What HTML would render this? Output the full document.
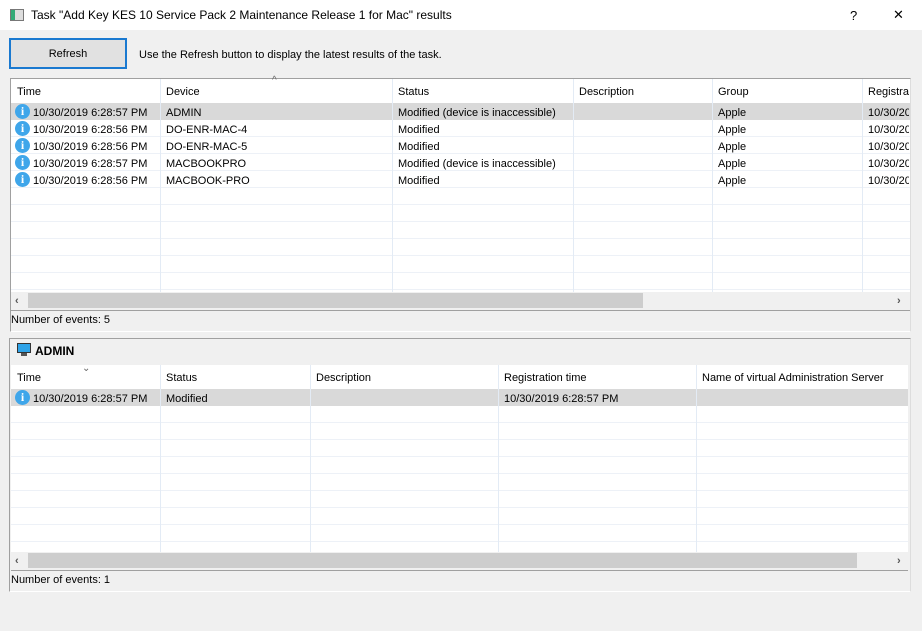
<!DOCTYPE html><html><head><style>
*{margin:0;padding:0;box-sizing:border-box}
body{width:922px;height:631px;background:#f0f0f0;font-family:"Liberation Sans",sans-serif;font-size:11px;color:#000;position:relative;overflow:hidden}
.a{position:absolute}
.t{position:absolute;white-space:nowrap;line-height:17px;padding-top:1px}
.ic{position:absolute;width:15px;height:15px;border-radius:50%;background:#3fa6ea;color:#fff;font:bold 12px "Liberation Serif",serif;text-align:center;line-height:15px}
.grid{position:absolute;background-color:#fff;background-image:repeating-linear-gradient(to bottom,transparent 0,transparent 16px,#edf1f7 16px,#edf1f7 17px)}
.vl{position:absolute;width:1px;background:#e3ebf5}
.sel{position:absolute;background:#d9d9d9}
</style></head><body>
<div class="a" style="left:0;top:0;width:922px;height:30px;background:#fff"></div>
<div class="a" style="left:10px;top:9px;width:14px;height:12px;border:1px solid #777;background:linear-gradient(90deg,#3a7 0 4px,#ddd 4px)"></div>
<div class="t" style="left:31px;top:6px;font-size:12px">Task "Add Key KES 10 Service Pack 2 Maintenance Release 1 for Mac" results</div>
<div class="t" style="left:850px;top:6px;font-size:13px">?</div>
<div class="t" style="left:893px;top:5px;font-size:13px">✕</div>
<div class="a" style="left:9px;top:38px;width:118px;height:31px;border:2px solid #1a79d0;background:#e1e1e1"></div>
<div class="t" style="left:9px;top:45px;width:118px;text-align:center">Refresh</div>
<div class="t" style="left:139px;top:46px">Use the Refresh button to display the latest results of the task.</div>

<!-- top panel -->
<div class="a" style="left:10px;top:78px;width:901px;height:254px;border:1px solid #a0a0a0;border-right-color:#ddd;border-bottom-color:#fff;background:#f0f0f0"></div>
<div class="a" style="left:11px;top:79px;width:899px;height:24px;background:#fff"></div>
<div class="grid" style="left:11px;top:103px;width:899px;height:189px"></div>
<div class="sel" style="left:11px;top:103px;width:899px;height:17px"></div>
<div class="vl" style="left:160px;top:79px;height:213px"></div>
<div class="vl" style="left:392px;top:79px;height:213px"></div>
<div class="vl" style="left:573px;top:79px;height:213px"></div>
<div class="vl" style="left:712px;top:79px;height:213px"></div>
<div class="vl" style="left:862px;top:79px;height:213px"></div>
<div class="t" style="left:272px;top:71px;font-size:10px;color:#666">^</div>
<div class="t" style="left:17px;top:83px">Time</div><div class="t" style="left:166px;top:83px">Device</div><div class="t" style="left:398px;top:83px">Status</div><div class="t" style="left:579px;top:83px">Description</div><div class="t" style="left:718px;top:83px">Group</div><div class="t" style="left:868px;top:83px;width:41px;overflow:hidden">Registra</div>

<div class="ic" style="left:15px;top:104px">i</div><div class="t" style="left:33px;top:104px">10/30/2019 6:28:57 PM</div><div class="t" style="left:166px;top:104px">ADMIN</div><div class="t" style="left:398px;top:104px">Modified (device is inaccessible)</div><div class="t" style="left:718px;top:104px">Apple</div><div class="t" style="left:868px;top:104px;width:41px;overflow:hidden">10/30/2019</div>
<div class="ic" style="left:15px;top:121px">i</div><div class="t" style="left:33px;top:121px">10/30/2019 6:28:56 PM</div><div class="t" style="left:166px;top:121px">DO-ENR-MAC-4</div><div class="t" style="left:398px;top:121px">Modified</div><div class="t" style="left:718px;top:121px">Apple</div><div class="t" style="left:868px;top:121px;width:41px;overflow:hidden">10/30/2019</div>
<div class="ic" style="left:15px;top:138px">i</div><div class="t" style="left:33px;top:138px">10/30/2019 6:28:56 PM</div><div class="t" style="left:166px;top:138px">DO-ENR-MAC-5</div><div class="t" style="left:398px;top:138px">Modified</div><div class="t" style="left:718px;top:138px">Apple</div><div class="t" style="left:868px;top:138px;width:41px;overflow:hidden">10/30/2019</div>
<div class="ic" style="left:15px;top:155px">i</div><div class="t" style="left:33px;top:155px">10/30/2019 6:28:57 PM</div><div class="t" style="left:166px;top:155px">MACBOOKPRO</div><div class="t" style="left:398px;top:155px">Modified (device is inaccessible)</div><div class="t" style="left:718px;top:155px">Apple</div><div class="t" style="left:868px;top:155px;width:41px;overflow:hidden">10/30/2019</div>
<div class="ic" style="left:15px;top:172px">i</div><div class="t" style="left:33px;top:172px">10/30/2019 6:28:56 PM</div><div class="t" style="left:166px;top:172px">MACBOOK-PRO</div><div class="t" style="left:398px;top:172px">Modified</div><div class="t" style="left:718px;top:172px">Apple</div><div class="t" style="left:868px;top:172px;width:41px;overflow:hidden">10/30/2019</div>

<div class="a" style="left:11px;top:292px;width:899px;height:17px;background:#f0f0f0"></div>
<div class="a" style="left:28px;top:293px;width:615px;height:15px;background:#cdcdcd"></div>
<div class="t" style="left:15px;top:292px;font-weight:bold;color:#555">&lsaquo;</div>
<div class="t" style="left:897px;top:292px;font-weight:bold;color:#555">&rsaquo;</div>
<div class="a" style="left:11px;top:310px;width:899px;height:1px;background:#a0a0a0"></div>
<div class="t" style="left:11px;top:311px">Number of events: 5</div>

<!-- bottom panel -->
<div class="a" style="left:9px;top:338px;width:902px;height:254px;border:1px solid #a0a0a0;border-right-color:#ddd;border-bottom-color:#fff;background:#f0f0f0"></div>
<div class="a" style="left:17px;top:343px;width:14px;height:10px;background:#2ea3e8;border:1px solid #333"></div>
<div class="a" style="left:21px;top:353px;width:6px;height:3px;background:#555"></div>
<div class="t" style="left:35px;top:342px;font-weight:bold;font-size:12px">ADMIN</div>
<div class="a" style="left:11px;top:365px;width:897px;height:24px;background:#fff"></div>
<div class="grid" style="left:11px;top:389px;width:897px;height:163px"></div>
<div class="sel" style="left:11px;top:389px;width:897px;height:17px"></div>
<div class="vl" style="left:160px;top:365px;height:187px"></div>
<div class="vl" style="left:310px;top:365px;height:187px"></div>
<div class="vl" style="left:498px;top:365px;height:187px"></div>
<div class="vl" style="left:696px;top:365px;height:187px"></div>
<div class="t" style="left:82px;top:359px;font-size:10px;color:#666">&#8964;</div>
<div class="t" style="left:17px;top:369px">Time</div><div class="t" style="left:166px;top:369px">Status</div><div class="t" style="left:316px;top:369px">Description</div><div class="t" style="left:504px;top:369px">Registration time</div><div class="t" style="left:702px;top:369px">Name of virtual Administration Server</div>
<div class="ic" style="left:15px;top:390px">i</div><div class="t" style="left:33px;top:390px">10/30/2019 6:28:57 PM</div><div class="t" style="left:166px;top:390px">Modified</div><div class="t" style="left:504px;top:390px">10/30/2019 6:28:57 PM</div>
<div class="a" style="left:11px;top:552px;width:897px;height:17px;background:#f0f0f0"></div>
<div class="a" style="left:28px;top:553px;width:829px;height:15px;background:#cdcdcd"></div>
<div class="t" style="left:15px;top:552px;font-weight:bold;color:#555">&lsaquo;</div>
<div class="t" style="left:897px;top:552px;font-weight:bold;color:#555">&rsaquo;</div>
<div class="a" style="left:11px;top:570px;width:897px;height:1px;background:#a0a0a0"></div>
<div class="t" style="left:11px;top:571px">Number of events: 1</div>
</body></html>
